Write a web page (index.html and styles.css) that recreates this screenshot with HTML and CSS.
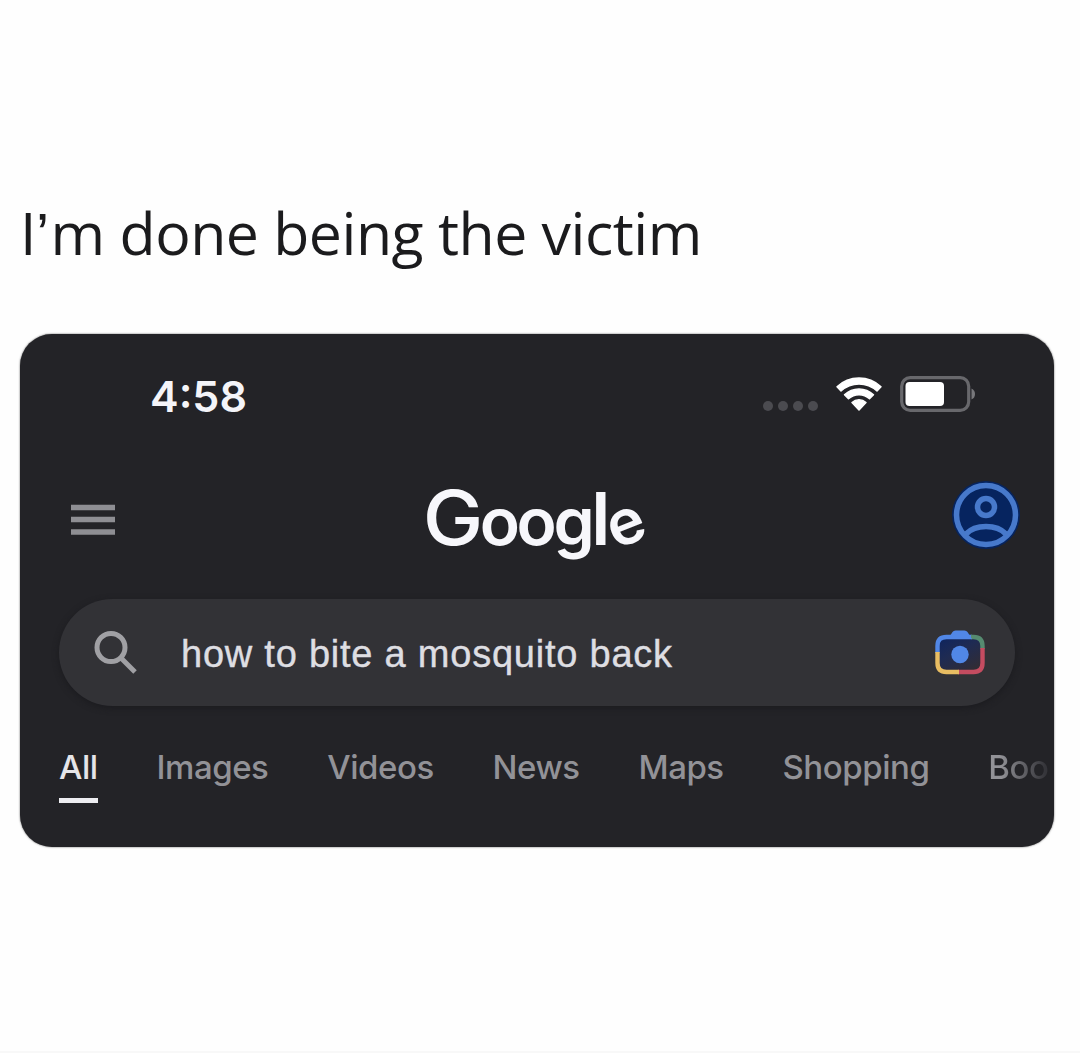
FILE: index.html
```html
<!DOCTYPE html>
<html lang="en">
<head>
<meta charset="utf-8">
<title>I’m done being the victim</title>
<link rel="stylesheet" href="styles.css">
</head>
<body>
<main class="post">
  <p class="caption">I<span class="quote">’</span>m done being the victim</p>
  <section class="phone">
    <div class="status">
      <time class="clock">4:58</time>
      <div class="indicators">
        <span class="cell"><i></i><i></i><i></i><i></i></span>
        <svg class="wifi" width="48" height="36" viewBox="0 0 48 36">
          <path d="M2 10.800A32 32 0 0 1 46 10.800L42 15A26.500 26.500 0 0 0 6 15Z"/>
          <path d="M9.500 18.800A21 21 0 0 1 38.500 18.800L34.500 22.800A15.500 15.500 0 0 0 13.500 22.800Z"/>
          <path d="M17 26.500A10.500 10.500 0 0 1 31 26.500L24 34Z"/>
        </svg>
        <svg class="battery" width="76" height="36" viewBox="0 0 76 36">
          <rect class="shell" x="1.7" y="1.7" width="67" height="32.6" rx="8.5"/>
          <rect class="level" x="5.5" y="6" width="38.500" height="24" rx="4"/>
          <path class="tip" d="M71.500 12.500Q75 14 75 18T71.500 23.500Z"/>
        </svg>
      </div>
    </div>
    <header class="header">
      <svg class="menu" width="46" height="32" viewBox="0 0 46 32">
        <path d="M1 3.500H45M1 15.500H45M1 28H45"/>
      </svg>
      <div class="logo"><span class="cap">G</span>oog<span class="tall">l</span><span class="tilt">e</span></div>
      <svg class="avatar" width="70" height="70" viewBox="0 0 70 70">
        <circle class="disc" cx="35" cy="35" r="34"/>
        <circle cx="35" cy="35" r="29.500"/>
        <circle cx="35" cy="27" r="8.500"/>
        <path d="M15 54Q22 46.500 35 46.500T55 54"/>
      </svg>
    </header>
    <div class="search">
      <svg class="lens" width="46" height="46" viewBox="0 0 46 46">
        <circle cx="18" cy="17.500" r="14"/>
        <path d="M27.500 27.500L42 42"/>
      </svg>
      <span class="query">how to bite a mosquito back</span>
      <svg class="camera" width="54" height="50" viewBox="0 0 54 50">
        <defs>
          <linearGradient id="glow" x1="0" y1="0" x2="0.7" y2="1">
            <stop offset="0" stop-color="#0d2460"/>
            <stop offset="0.5" stop-color="#1f2b52"/>
            <stop offset="1" stop-color="#302c35"/>
          </linearGradient>
        </defs>
        <rect class="back" x="3.500" y="8.500" width="45" height="35" rx="9"/>
        <path class="blue" d="M3.500 25V18Q3.500 9 12.500 9H38"/>
        <path class="green" d="M37 9H39.500Q48.500 9 48.500 18V21"/>
        <path class="red" d="M48.500 20V35Q48.500 44 39.500 44H24"/>
        <path class="yellow" d="M3.500 24V35Q3.500 44 12.500 44H25"/>
        <path class="hump" d="M14 11L18.500 4Q19.500 2.500 21.500 2.500H30.500Q32.500 2.500 33.500 4L38 11Z"/>
        <circle class="hump" cx="26" cy="26.500" r="8.700"/>
      </svg>
    </div>
    <nav class="tabs">
      <a class="tab active">All</a>
      <a class="tab">Images</a>
      <a class="tab">Videos</a>
      <a class="tab">News</a>
      <a class="tab">Maps</a>
      <a class="tab">Shopping</a>
      <a class="tab last">Boo</a>
    </nav>
  </section>
</main>
</body>
</html>
```
FILE: styles.css
```css
* { box-sizing: border-box; }
body { margin: 0; background: #fefefe; }
.post {
  height: 1053px;
  padding: 191px 26px 0 20px;
  border-bottom: 2px solid #f8f8f8;
  overflow: hidden;
}
.caption {
  margin: 0 0 61px;
  height: 82px;
  line-height: 82px;
  font-family: "Open Sans", sans-serif;
  font-size: 59px;
  letter-spacing: -0.5px;
  color: #1b1b1d;
  white-space: nowrap;
}
.quote { font-family: "Liberation Sans", Arial, sans-serif; letter-spacing: 1.5px; }
.phone {
  height: 513px;
  border-radius: 32px;
  background: #232327;
  overflow: hidden;
  box-shadow: 0 0 2px #555;
}
.status {
  height: 121px;
  padding: 0 78px 0 130px;
  display: flex;
  justify-content: space-between;
  align-items: center;
}
.clock {
  padding-top: 2px;
  font: 600 43px/50px "Inter", sans-serif;
  color: #f4f4f8;
}
.indicators { display: flex; align-items: center; margin-bottom: 1px; }
.cell { display: flex; gap: 5px; margin: 24px 17px 0 0; }
.cell i { width: 10px; height: 10px; border-radius: 50%; background: #4b4b50; }
.wifi {
  fill: #fff;
  stroke: #fff;
  stroke-width: 1.5;
  stroke-linejoin: round;
  margin-right: 17px;
}
.shell { fill: none; stroke: #68686c; stroke-width: 3.2; }
.level { fill: #fff; }
.tip { fill: #77777b; }
.header {
  height: 128px;
  padding: 0 33px 0 50px;
  display: flex;
  justify-content: space-between;
  align-items: center;
}
.menu { stroke: #8e8e93; stroke-width: 5.500; margin-top: 2px; }
.logo {
  font: 600 66px/90px "Inter", sans-serif;
  letter-spacing: -3.4px;
  margin: 2px 2px 0 0;
  color: #f7f7fb;
  white-space: nowrap;
}
.cap {
  display: inline-block;
  font-size: 75px;
  font-weight: 500;
  letter-spacing: -1.5px;
  transform: scaleX(1.08);
}
.tall { font-size: 73px; letter-spacing: -4.5px; }
.tilt { display: inline-block; font-size: 63px; transform: rotate(-22deg); }
.avatar { fill: none; stroke: #4779cb; stroke-width: 5.5; margin-bottom: 8px; }
.disc { fill: #06245f; stroke: none; }
.search {
  height: 107px;
  margin: 16px 39px 0;
  padding: 0 27px 0 34px;
  border-radius: 54px;
  background: #323236;
  box-shadow: 0 2px 6px #1b1b1f;
  display: flex;
  align-items: center;
}
.lens { fill: none; stroke: #a0a0a4; stroke-width: 5; }
.query {
  flex: 1;
  margin-left: 42px;
  padding-top: 2px;
  font: 38px/50px "Liberation Sans", Arial, sans-serif;
  letter-spacing: 0.77px;
  -webkit-text-stroke: 0.4px #dedee2;
  color: #dedee2;
  white-space: nowrap;
}
.camera { fill: none; stroke-width: 4.4; }
.camera .back { fill: url(#glow); }
.blue { stroke: #5187e6; }
.green { stroke: #568b70; }
.red { stroke: #c44c60; }
.yellow { stroke: #e8bd62; }
.hump { fill: #5187e6; }
.tabs {
  height: 100px;
  padding: 34px 0 0 39px;
  display: flex;
  gap: 58.8px;
}
.tab {
  flex: none;
  height: 63px;
  font: 500 33px/54px "Inter", sans-serif;
  letter-spacing: -0.45px;
  color: #929297;
}
.active { color: #e5e5e9; border-bottom: 5px solid #ededf1; }
.last {
  background: linear-gradient(to right, #929297 20%, #35353a 95%);
  -webkit-background-clip: text;
  background-clip: text;
  color: transparent;
}
```
